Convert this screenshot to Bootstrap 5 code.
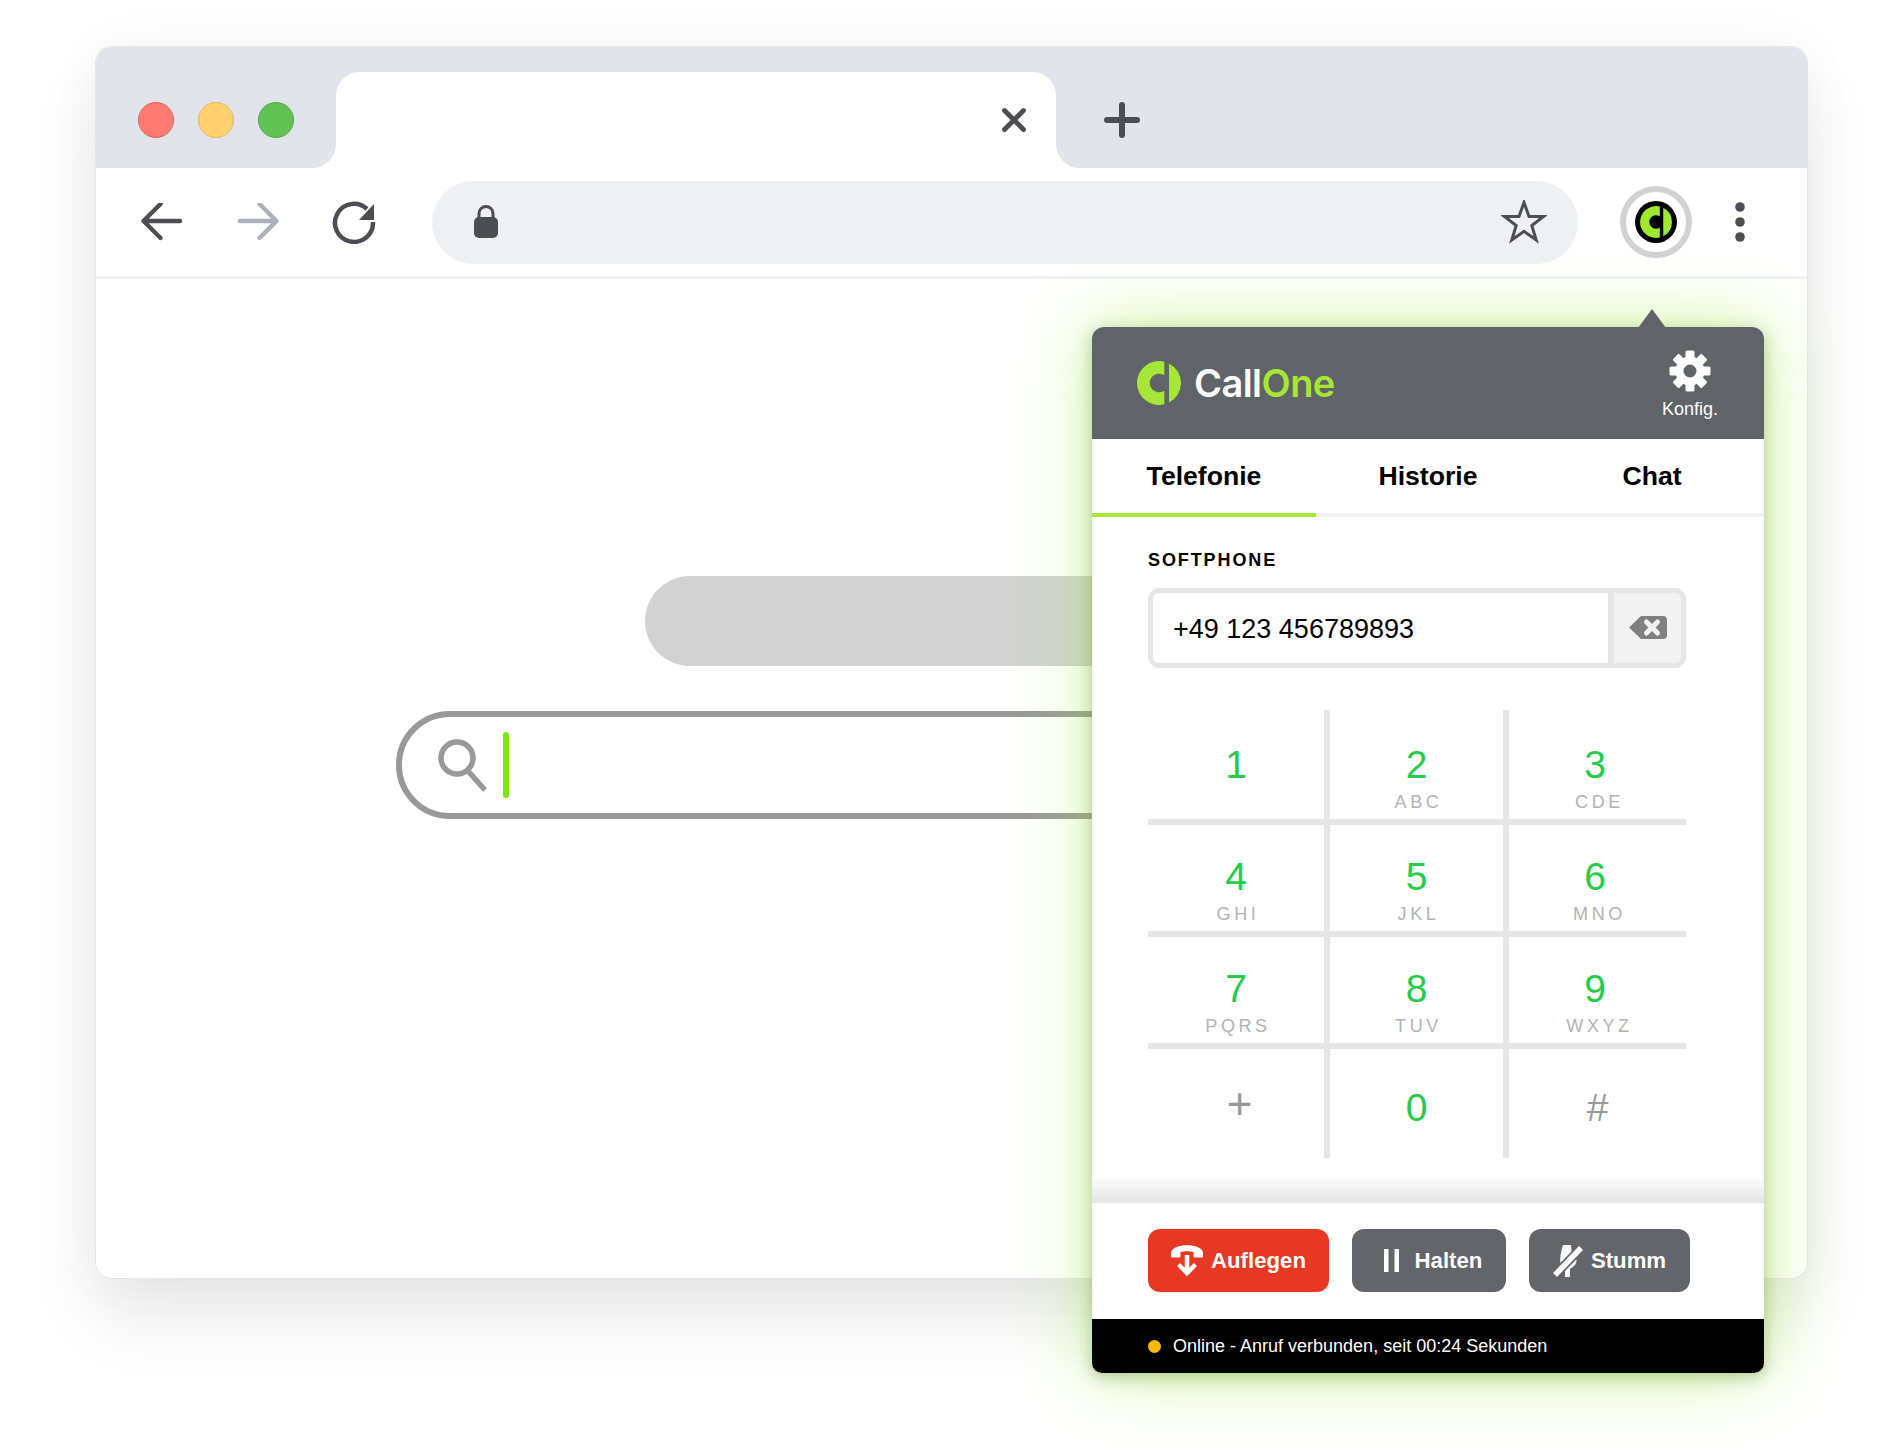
<!DOCTYPE html>
<html lang="de">
<head>
<meta charset="utf-8">
<title>CallOne</title>
<link href="https://cdn.jsdelivr.net/npm/bootstrap@5.3.0/dist/css/bootstrap.min.css" rel="stylesheet">
<style>
body{background:#fff;font-family:"Liberation Sans",Arial,sans-serif;padding:47px 95px 0 96px;height:1455px;overflow:hidden;color:#000}
.win{position:relative;height:1231px;background:#fff;border-radius:16px;box-shadow:0 0 0 1px #e6e6ea,0 40px 70px rgba(0,0,0,.09),0 0 60px rgba(0,0,0,.04)}
.win-top{height:121px;background:#fff;border-radius:16px 16px 0 0;overflow:hidden}
.strip-left{width:240px;background:#e1e4eb;border-bottom-right-radius:24px;gap:24px;padding:55px 0 0 42px}
.tl{width:36px;height:36px;border-radius:50%;border:1px solid}
.tl-r{background:#ff7a70;border-color:#e0605a}
.tl-y{background:#ffd06e;border-color:#e5b45e}
.tl-g{background:#62c254;border-color:#4ea846}
.tab-wrap{width:720px;background:#e1e4eb}
.tab-sheet{height:96px;margin-top:25px;background:#fff;border-radius:24px 24px 0 0;padding-right:29px}
.strip-right{background:#e1e4eb;border-bottom-left-radius:24px;padding:55px 0 0 48px}
.tool-row{height:111px;border-bottom:3px solid #eff1f5;padding:0 62px 0 45px}
.gap-fwd{margin-left:54px}
.gap-reload{margin-left:53px}
.addr{width:1146px;height:83px;background:#eff0f4;border-radius:42px;margin-left:56px;padding:0 31px 0 42px}
.ext-ring{width:72px;height:72px;border:6px solid #d1d2d4;border-radius:50%;margin-left:42px}
.page-body{padding-top:297px;gap:45px}
.pill-gray{width:614px;height:90px;background:#d2d2d2;border-radius:45px}
.search-box{width:1112px;height:108px;border:6px solid #999;border-radius:54px;padding-left:36px}
.caret-bar{width:6px;height:66px;background:#7fe50f;border-radius:3px;margin-left:15px}
.popup{position:absolute;left:996px;top:280px;width:672px;height:1046px;background:#fff;border-radius:12px;box-shadow:0 0 70px rgba(165,235,70,.55),0 4px 16px rgba(40,90,10,.35)}
.pop-arrow{position:absolute;right:98px;top:-18px;width:28px;height:19px;background:#606368;clip-path:polygon(50% 0,100% 100%,0 100%)}
.pop-head{height:112px;background:#606368;border-radius:12px 12px 0 0;padding:0 46px 0 45px}
.brand-word{font-family:Inter,sans-serif;font-weight:600;font-size:38px;letter-spacing:-.55px;color:#fff;margin-left:13px;line-height:44px}
.brand-word span{color:#a6e636}
.konfig-box{padding-top:3px}
.konfig{color:#fff;font-size:18px;line-height:22px;margin-top:6px}
.tabs-line{height:78px;border-bottom:4px solid #f2f2f2}
.tab-item{width:224px;height:78px;font-size:26.6px;font-weight:700;color:#000;line-height:74px;text-align:center;padding:0;text-decoration:none}
.tab-item.on{border-bottom:4px solid #a6e636;margin-bottom:-4px}
.tab-item:hover,.tab-item:focus{color:#000}
.pop-main{padding:0 78px 0 56px;height:686px;position:relative}
.pop-main:after{content:"";position:absolute;left:0;right:0;bottom:0;height:28px;background:linear-gradient(to bottom,rgba(228,228,228,0),rgba(228,228,228,1))}
.soft-label{font-size:18px;font-weight:700;letter-spacing:1.9px;line-height:20px;padding-top:33px;height:71px;margin:0}
.dial-input{height:80px;width:538px;border:5px solid #e6e6e6;border-radius:11px;overflow:hidden}
.dial-num{width:461px;border-right:6px solid #e6e6e6;font-size:27px;padding-left:20px;line-height:72px;height:70px}
.dial-back{background:#f2f2f2;padding-bottom:2px}
.keys{display:grid;width:538px;grid-template-columns:182px 179px 177px;grid-template-rows:115px 112px 112px 109px;margin-top:42px}
.key{text-align:center;border-right:6px solid #e6e6e6;border-bottom:6px solid #e6e6e6;padding-top:30px;background:transparent}
.key.r1{padding-top:33px}
.key.r4{border-bottom:0;padding-top:37px}
.key.c3{border-right:0}
.key-n{font-size:39px;line-height:44px;color:#25cc4a}
.key.c3 .key-n.dig{padding-right:5px}
.key-n.sym{color:#999}
.key-n.plus{font-size:44px;padding-left:7px;margin-top:-4px}
.key-s{font-size:18px;line-height:20px;color:#b3b3b3;letter-spacing:3.6px;margin-top:5px;padding-left:4px}
.actions{height:116px;padding:26px 0 0 56px;gap:23px}
.act{height:63px;border-radius:12px;border:0;color:#fff;font-size:22.2px;font-weight:700;padding:0;line-height:63px}
.act:hover{color:#fff}
.act-red{width:181px;background:#e63822}
.act-red:hover{background:#e63822}
.act-gray{background:#63656a}
.act-gray:hover{background:#63656a}
.act-hold{width:154px;padding-left:8px}
.act-mute{width:161px}
.status{height:54px;background:#000;color:#fff;font-size:18px;padding-left:56px;border-radius:0 0 10px 10px}
.stat-dot{width:13px;height:13px;border-radius:50%;background:#fbb900;margin-right:12px}
</style>
</head>
<body>
<div class="win">
  <div class="win-top d-flex">
    <div class="strip-left d-flex align-items-start flex-shrink-0">
      <span class="tl tl-r"></span><span class="tl tl-y"></span><span class="tl tl-g"></span>
    </div>
    <div class="tab-wrap flex-shrink-0">
      <div class="tab-sheet d-flex align-items-center justify-content-end">
        <svg width="26" height="26" viewBox="0 0 26 26"><path d="M3.500 3.500 22.500 22.500M22.500 3.500 3.500 22.500" stroke="#4d4e53" stroke-width="4.8" stroke-linecap="round"/></svg>
      </div>
    </div>
    <div class="strip-right flex-grow-1">
      <svg class="d-block" width="36" height="36" viewBox="0 0 36 36"><path d="M18 3V33M3 18H33" stroke="#4d4e53" stroke-width="6" stroke-linecap="round"/></svg>
    </div>
  </div>
  <div class="tool-row d-flex align-items-center">
    <svg width="42" height="38" viewBox="0 1 42 38" class="flex-shrink-0"><path d="M39 19H3M19.500 2 2.500 19 19.500 36" fill="none" stroke="#4d4e53" stroke-width="4.400" stroke-linecap="round" stroke-linejoin="round"/></svg>
    <svg width="42" height="38" viewBox="0 1 42 38" class="gap-fwd flex-shrink-0"><path d="M3 19H39M22.500 2 39.500 19 22.500 36" fill="none" stroke="#adb0ba" stroke-width="4.400" stroke-linecap="round" stroke-linejoin="round"/></svg>
    <svg width="44" height="44" viewBox="0 0 44 44" class="gap-reload flex-shrink-0"><path d="M35 9A19 19 0 1 0 41 22" fill="none" stroke="#4d4e53" stroke-width="4.500"/><path d="M42 4V20H27Z" fill="#4d4e53"/></svg>
    <div class="addr d-flex align-items-center justify-content-between flex-shrink-0">
      <svg width="24" height="34" viewBox="0 1 24 34"><path d="M5 15V9.500A7 7 0 0 1 19 9.500V15" fill="none" stroke="#4d4e53" stroke-width="3"/><rect x="0" y="13" width="24" height="21" rx="5" fill="#4d4e53"/></svg>
      <svg width="46" height="44" viewBox="0 1 46 44"><path d="M23 3.500 28 17.500H42.500L30.800 26.500 35.200 41 23 32.300 10.800 41 15.200 26.500 3.500 17.500H18Z" fill="none" stroke="#4d4e53" stroke-width="3"/></svg>
    </div>
    <div class="ext-ring d-flex align-items-center justify-content-center flex-shrink-0">
      <svg width="42" height="42" viewBox="-7 -7 58 58"><circle cx="22" cy="22" r="29" fill="#000"/><path d="M27.300.65A22 22 0 1 0 27.300 43.350V29.650A9.300 9.300 0 1 1 27.300 14.350ZM32 2.400A22 22 0 0 1 32 41.600Z" fill="#a0ea2c"/></svg>
    </div>
    <div class="d-flex flex-column align-items-center ms-auto">
      <svg width="10" height="40" viewBox="0 0 10 40"><circle cx="5" cy="5" r="4.800" fill="#4d4e53"/><circle cx="5" cy="20" r="4.800" fill="#4d4e53"/><circle cx="5" cy="35" r="4.800" fill="#4d4e53"/></svg>
    </div>
  </div>
  <div class="page-body d-flex flex-column align-items-center">
    <div class="pill-gray"></div>
    <div class="search-box d-flex align-items-center">
      <svg width="50" height="54" viewBox="0 0 50 54"><circle cx="19" cy="20" r="16" fill="none" stroke="#999" stroke-width="5.500"/><path d="M30 33 47 52" stroke="#999" stroke-width="5.500"/></svg>
      <span class="caret-bar"></span>
    </div>
  </div>

  <div class="popup d-flex flex-column">
    <span class="pop-arrow"></span>
    <div class="pop-head d-flex align-items-center justify-content-between">
      <div class="d-flex align-items-center">
        <svg width="44" height="44" viewBox="0 0 44 44"><path d="M27.300.65A22 22 0 1 0 27.300 43.350V29.650A9.300 9.300 0 1 1 27.300 14.350ZM32 2.400A22 22 0 0 1 32 41.600Z" fill="#a6e636"/></svg>
        <div class="brand-word">Call<span>One</span></div>
      </div>
      <div class="konfig-box d-flex flex-column align-items-center">
        <svg width="42" height="42" viewBox="-21 -21 42 42"><circle r="10.500" fill="none" stroke="#fff" stroke-width="8"/><g fill="#fff"><rect x="-4.500" y="-20.500" width="9" height="9" rx="1.500"/><rect x="-4.500" y="-20.500" width="9" height="9" rx="1.500" transform="rotate(45)"/><rect x="-4.500" y="-20.500" width="9" height="9" rx="1.500" transform="rotate(90)"/><rect x="-4.500" y="-20.500" width="9" height="9" rx="1.500" transform="rotate(135)"/><rect x="-4.500" y="-20.500" width="9" height="9" rx="1.500" transform="rotate(180)"/><rect x="-4.500" y="-20.500" width="9" height="9" rx="1.500" transform="rotate(225)"/><rect x="-4.500" y="-20.500" width="9" height="9" rx="1.500" transform="rotate(270)"/><rect x="-4.500" y="-20.500" width="9" height="9" rx="1.500" transform="rotate(315)"/></g></svg>
        <div class="konfig">Konfig.</div>
      </div>
    </div>
    <nav class="nav tabs-line flex-nowrap">
      <a class="nav-link tab-item on" href="#">Telefonie</a>
      <a class="nav-link tab-item" href="#">Historie</a>
      <a class="nav-link tab-item" href="#">Chat</a>
    </nav>
    <div class="pop-main">
      <p class="soft-label">SOFTPHONE</p>
      <div class="dial-input d-flex">
        <div class="dial-num">+49 123 456789893</div>
        <div class="dial-back flex-grow-1 d-flex align-items-center justify-content-center">
          <svg width="38" height="23" viewBox="0 0 38 23"><path d="M12 0H34A4 4 0 0 1 38 4V19A4 4 0 0 1 34 23H12L0 11.500Z" fill="#808080"/><path d="M17.500 6 28.500 17M28.500 6 17.500 17" stroke="#f2f2f2" stroke-width="5" stroke-linecap="round"/></svg>
        </div>
      </div>
      <div class="keys">
        <div class="key r1"><div class="key-n">1</div></div>
        <div class="key r1"><div class="key-n">2</div><div class="key-s">ABC</div></div>
        <div class="key r1 c3"><div class="key-n dig">3</div><div class="key-s">CDE</div></div>
        <div class="key"><div class="key-n">4</div><div class="key-s">GHI</div></div>
        <div class="key"><div class="key-n">5</div><div class="key-s">JKL</div></div>
        <div class="key c3"><div class="key-n dig">6</div><div class="key-s">MNO</div></div>
        <div class="key"><div class="key-n">7</div><div class="key-s">PQRS</div></div>
        <div class="key"><div class="key-n">8</div><div class="key-s">TUV</div></div>
        <div class="key c3"><div class="key-n dig">9</div><div class="key-s">WXYZ</div></div>
        <div class="key r4"><div class="key-n sym plus">+</div></div>
        <div class="key r4"><div class="key-n">0</div></div>
        <div class="key r4 c3"><div class="key-n sym">#</div></div>
      </div>
    </div>
    <div class="actions d-flex">
      <button type="button" class="btn act act-red d-flex align-items-center justify-content-center gap-2">
        <svg width="32" height="32" viewBox="0 0 32 32"><path d="M0 8C0-2.500 32-2.500 32 8V11.500A1 1 0 0 1 31 12.500H24C23 12.500 22.500 12 22.500 11V7C19 6 13 6 9.500 7V11C9.500 12 9 12.500 8 12.500H1A1 1 0 0 1 0 11.500Z" fill="#fff"/><path d="M16 10V28M7.500 19.500 16 28 24.500 19.500" fill="none" stroke="#fff" stroke-width="4.500"/></svg>
        <span>Auflegen</span>
      </button>
      <button type="button" class="btn act act-gray act-hold d-flex align-items-center justify-content-center">
        <svg width="15" height="23" viewBox="0 0 15 23" class="me-3"><path d="M0 0H4.500V23H0ZM10.500 0H15V23H10.500Z" fill="#fff"/></svg>
        <span>Halten</span>
      </button>
      <button type="button" class="btn act act-gray act-mute d-flex align-items-center justify-content-center gap-2">
        <svg width="30" height="34" viewBox="0 0 30 34"><path d="M10 1H18L19 12 8 22C6 16 8 7 10 1ZM22 12C24 14 24 19 22 21 20 23 18 24 17 25V33H12V26L23 15Z" fill="#fff" fill-opacity=".95"/><path d="M2 31 28 4" stroke="#63656a" stroke-width="9"/><path d="M2 31 28 4" stroke="#fff" stroke-width="5.500"/></svg>
        <span>Stumm</span>
      </button>
    </div>
    <div class="status d-flex align-items-center">
      <span class="stat-dot"></span><span>Online - Anruf verbunden, seit 00:24 Sekunden</span>
    </div>
  </div>
</div>
<script src="https://cdn.jsdelivr.net/npm/bootstrap@5.3.0/dist/js/bootstrap.bundle.min.js"></script>
</body>
</html>
